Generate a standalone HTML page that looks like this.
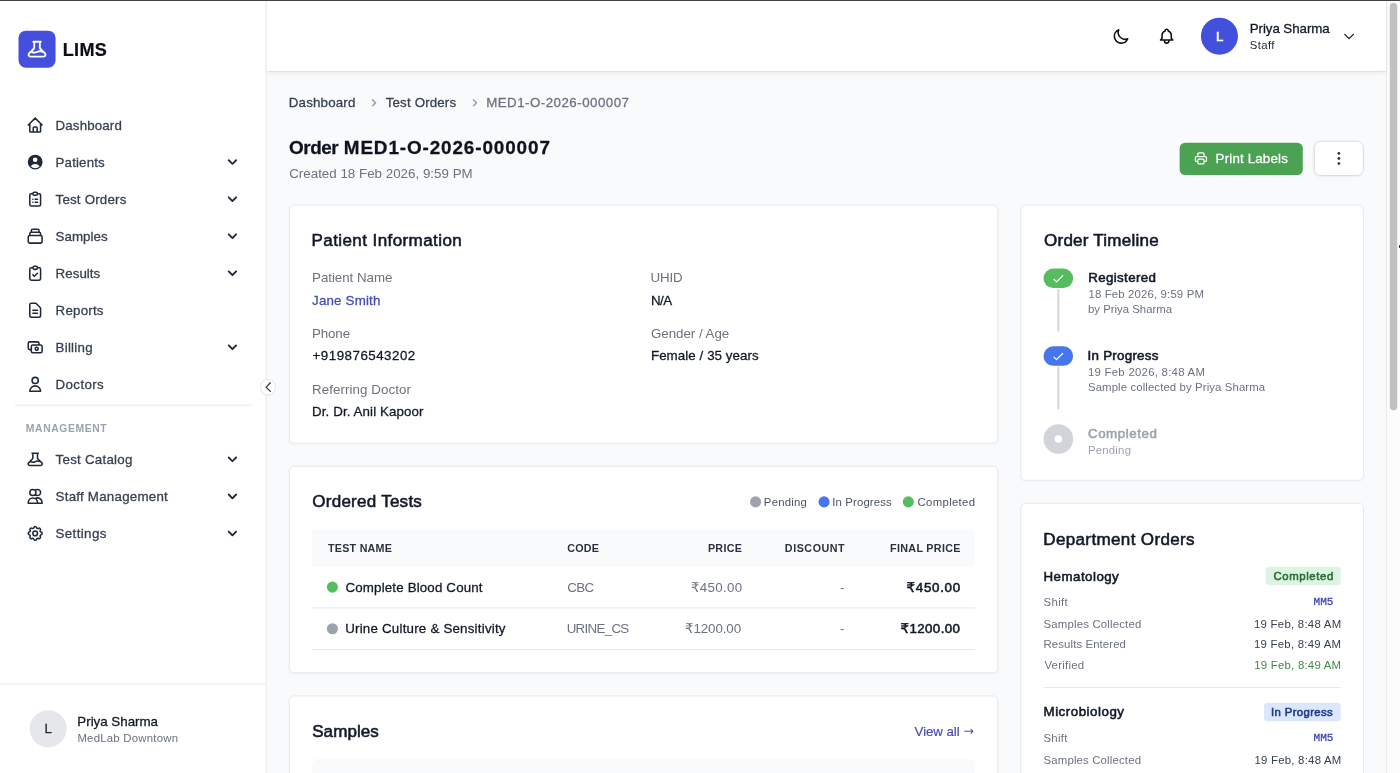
<!DOCTYPE html>
<html lang="en">
<head>
<meta charset="utf-8">
<title>Order MED1-O-2026-000007 · LIMS</title>
<style>
*{box-sizing:border-box;margin:0;padding:0}
html,body{width:1400px;height:773px;overflow:hidden;background:#f9fafb}
body{font-family:"Liberation Sans","DejaVu Sans",sans-serif;color:#111827;position:relative;-webkit-font-smoothing:antialiased}
#topline{position:absolute;left:0;top:0;width:1400px;height:1px;background:#434343;z-index:50}
#root{filter:opacity(1);position:absolute;left:0;top:1px;width:1512px;height:834px;transform:scale(.925926);transform-origin:0 0;background:#f9fafb;overflow:hidden}
svg{display:block;flex:none}
.ic{width:20px;height:20px;fill:none;stroke:currentColor;stroke-width:2;stroke-linecap:round;stroke-linejoin:round}
.m{-webkit-text-stroke:.3px currentColor}
.sb{font-weight:400!important;-webkit-text-stroke:.6px currentColor}
/* sidebar */
#sb{position:absolute;left:0;top:0;width:288px;height:834px;background:#fff;border-right:1px solid #e5e7eb}
#logo{position:absolute;left:20px;top:32px;width:40px;height:40px;border-radius:8px;background:#454fdd;color:#fff;display:flex;align-items:center;justify-content:center}
#brand{position:absolute;left:68px;top:38px;font-size:19.5px;line-height:28px;font-weight:700;color:#0b0f19;-webkit-text-stroke:.25px currentColor}
.nav{position:absolute;left:16px;width:256px;height:36px;padding:8px 12px;display:flex;align-items:center;color:#374151;font-size:14.4px;line-height:20px}
.nav .ic{margin-right:12px;color:#1f2937}
.nav .ch{margin-left:auto;width:20px;height:20px;margin-right:-1px;fill:#1f2937}
#sbdiv{position:absolute;left:16px;top:436px;width:256px;height:1px;background:#e5e7eb}
#mgmt{position:absolute;left:28px;top:453.4px;font-size:11.2px;line-height:16px;font-weight:700;color:#9ca3af;letter-spacing:.45px}
#sbfoot{position:absolute;left:0;top:736.8px;width:287px;height:98px;border-top:1px solid #e5e7eb}
#sbav{position:absolute;left:32px;top:28.6px;width:40px;height:40px;border-radius:50%;background:#e5e7eb;color:#1f2937;font-size:14.4px;line-height:40px;text-align:center}
#sbname{position:absolute;left:84px;top:30.6px;font-size:14.4px;line-height:20px;color:#111827;white-space:nowrap}
#sbsub{position:absolute;left:84px;top:50.6px;font-size:12.3px;line-height:16px;color:#6b7280;white-space:nowrap}
#tog{position:absolute;left:281.6px;top:408.9px;width:15.8px;height:15.8px;border-radius:50%;background:#fff;box-shadow:0 0 0 1px rgba(229,231,235,.9),0 1px 2px rgba(0,0,0,.08);color:#333;z-index:5;display:flex;align-items:center;justify-content:center}
/* header */
#hd{position:absolute;left:288px;top:0;width:1209px;height:76px;background:#fff;box-shadow:0 1px 1.5px rgba(0,0,0,.13),0 2px 5px rgba(0,0,0,.07);z-index:3}
#hd .ib{position:absolute;top:27.7px;color:#0b0f17}
#hdav{position:absolute;left:1009.3px;top:18px;width:40px;height:40px;border-radius:50%;background:#434fdd;color:#fff;font-size:14.4px;font-weight:700;line-height:40px;text-align:center}
#hdname{position:absolute;left:1062px;top:20px;font-size:14.4px;line-height:20px;color:#111827;white-space:nowrap}
#hdrole{position:absolute;left:1062px;top:40px;font-size:12.3px;line-height:16px;color:#1f2937;white-space:nowrap}
/* scrollbar */
#scr{position:absolute;left:1497px;top:0;width:15px;height:834px;background:#fcfcfc;border-left:1px solid #e8e8e8}
#scr i{position:absolute;left:3.2px;top:2px;width:7.6px;height:440px;border-radius:4px;background:#c1c1c1}
#cur{position:absolute;left:1398.6px;top:245.4px;width:1.4px;height:2.6px;background:#222;z-index:60;border-radius:1px 0 0 1px}
/* main */
#mn{position:absolute;left:288px;top:76px;width:1209px;height:758px;overflow:hidden}
.abs{position:absolute;white-space:nowrap}
.card{position:absolute;background:#fff;border:1px solid #e5e7eb;border-radius:5.5px;box-shadow:0 1px 2px rgba(0,0,0,.025)}
.ct{position:absolute;left:24px;top:24px;font-size:18.4px;line-height:28px;font-weight:700;color:#111827;white-space:nowrap;letter-spacing:.1px}
.lb{font-size:14.4px;line-height:20px;color:#6c717c;white-space:nowrap}
.vl{font-size:14.4px;line-height:20px;color:#111827;white-space:nowrap;margin-top:4px}
.fld{position:absolute}

.bc{font-size:14.4px;line-height:20px}
#ttl{left:24px;top:68px;font-size:20.4px;line-height:28px;font-weight:700;color:#0d1320;-webkit-text-stroke:.3px currentColor}
#crt{left:24px;top:100px;font-size:14.4px;line-height:20px;color:#6b7280}
#btnp{position:absolute;left:985.5px;top:76.5px;width:133.7px;height:35.6px;border-radius:6px;background:#4ba252;color:#fff;display:flex;align-items:center;padding-left:15.5px;font-size:14.4px;line-height:20px;white-space:nowrap}
#btnp span{margin-left:8px;position:relative;top:-.6px}
#btnm{position:absolute;left:1131px;top:75px;width:54px;height:38px;border-radius:8px;background:#fff;border:1px solid #d9dce1;box-shadow:0 1px 2px rgba(0,0,0,.05);display:flex;align-items:center;justify-content:center}
.lg{position:absolute;top:30px;font-size:12.3px;line-height:16px;color:#4b5563;white-space:nowrap;padding-left:16px}
.lg i{position:absolute;left:0;top:2px;width:12px;height:12px;border-radius:50%}
.th{position:absolute;background:#f9fafb;border-radius:8px 8px 0 0}
.th>div{position:absolute;top:12px;font-size:11.6px;line-height:16px;font-weight:700;color:#2a3240;letter-spacing:.7px;white-space:nowrap}
.tr{position:absolute;left:24px;width:716px;height:45px;border-bottom:1px solid #e5e7eb}
.tr>div{position:absolute;top:12px;font-size:14.4px;line-height:20px;color:#6b7280;white-space:nowrap}
.tr .dot{position:absolute;left:16px;top:16px;width:12px;height:12px;border-radius:50%}
.pill{position:absolute;left:24px;width:32px;height:21.400px;border-radius:16px;display:flex;align-items:center;justify-content:center}
.pill b{width:8px;height:8px;border-radius:50%;background:#fff}
.vln{position:absolute;left:39px;width:2px;height:46.300px;background:#d1d5db}
.tt{position:absolute;left:72px;font-size:14.4px;line-height:20px;font-weight:700;color:#111827;white-space:nowrap}
.ts{position:absolute;left:72px;font-size:12.3px;line-height:16px;color:#6b7280;white-space:nowrap}
.dh{position:absolute;left:24px;font-size:14.4px;line-height:20px;font-weight:700;color:#111827;white-space:nowrap}
.bdg{position:absolute;right:24px;height:20px;padding:2px 8px;border-radius:4px;font-size:12.3px;line-height:16px;font-weight:700;white-space:nowrap}
.dl{position:absolute;left:24px;font-size:12.3px;line-height:16px;color:#6b7280;white-space:nowrap}
.dv{position:absolute;right:24px;font-size:12.3px;line-height:16px;color:#374151;white-space:nowrap}
.mono{position:absolute;right:32px;font-family:"Liberation Mono","DejaVu Sans Mono",monospace;font-size:12px;line-height:20px;color:#3f45b0;white-space:nowrap;-webkit-text-stroke:.3px currentColor}
.hr{position:absolute;left:24px;right:24px;height:1px;background:#e5e7eb}
/* text fit */
#brandt{letter-spacing:0.37px;position:relative;left:-0.34px;top:-0.1px}
#n1{letter-spacing:0.15px;position:relative;top:-0.29px}
#n2{letter-spacing:0.16px;position:relative;top:-0.29px}
#n3{letter-spacing:0.21px;position:relative;top:-0.29px}
#n4{letter-spacing:0.05px;position:relative;top:-0.29px}
#n5{letter-spacing:0.05px;position:relative;top:-0.29px}
#n6{letter-spacing:0.23px;position:relative;top:-0.29px}
#n7{letter-spacing:0.26px;position:relative;top:-0.29px}
#n8{letter-spacing:0.41px;position:relative;top:-0.29px}
#n9{letter-spacing:0.27px;position:relative;top:-0.29px}
#n10{letter-spacing:0.26px;position:relative;top:-0.29px}
#n11{letter-spacing:0.41px;position:relative;top:-0.29px}
#mgmtt{letter-spacing:0.64px;position:relative;left:-0.08px}
#sbn{letter-spacing:-0.01px;position:relative;left:-0.46px;top:-0.29px}
#sbs{letter-spacing:0.25px;position:relative;left:-0.41px}
#hdn{letter-spacing:-0.07px;position:relative;left:-0.33px;top:-0.29px}
#hdr{letter-spacing:0.45px;position:relative;left:-0.38px}
#bc1{letter-spacing:0.18px;position:relative;left:-0.08px;top:-0.29px}
#bc2{letter-spacing:0.16px;position:relative;left:0.61px;top:-0.29px}
#bc3{letter-spacing:0.51px;position:relative;left:0.06px;top:-0.29px}
#ttl1{letter-spacing:-0.45px;position:relative;left:0.09px;top:-0.1px}
#ttl2{letter-spacing:0.96px;position:relative;left:0.32px;top:-0.1px}
#crtt{letter-spacing:0.02px;position:relative;left:0.32px;top:-0.29px}
#btnpt{letter-spacing:0.18px;position:relative;left:-0.15px;top:-0.29px}
#ct1{letter-spacing:0.44px;position:relative;left:-0.59px;top:0.17px}
#ct2{letter-spacing:0.27px;position:relative;left:0.23px;top:0.17px}
#ct3{letter-spacing:0.06px;position:relative;left:0.19px;top:0.17px}
#ct4{letter-spacing:0.25px;position:relative;left:0.54px;top:0.17px}
#ct5{letter-spacing:0.38px;position:relative;left:-0.31px;top:0.17px}
#f1l{letter-spacing:-0.04px;position:relative;top:-0.29px}
#f1v{letter-spacing:0.2px;position:relative;top:-0.29px}
#f3l{letter-spacing:-0.14px;position:relative;top:-0.29px}
#f3v{letter-spacing:0.53px;position:relative;left:0.62px;top:-0.29px}
#f5l{letter-spacing:0.08px;position:relative;top:-0.29px}
#f5v{letter-spacing:0.11px;position:relative;top:-0.29px}
#f2l{letter-spacing:-0.21px;position:relative;left:-0.39px;top:-0.29px}
#f2v{letter-spacing:-0.5px;position:relative;top:-0.29px}
#f4l{letter-spacing:-0.02px;position:relative;top:-0.29px}
#f4v{letter-spacing:0.08px;position:relative;top:-0.29px}
#th1{letter-spacing:0.25px;position:relative;left:1.3px}
#th2{letter-spacing:0.22px;position:relative;left:-0.25px}
#th3{letter-spacing:0.31px;position:relative;left:0.52px}
#th4{letter-spacing:0.58px;position:relative;left:-0.19px}
#th5{letter-spacing:0.34px;position:relative;left:0.63px}
#r1a{letter-spacing:0.17px;position:relative;left:0.14px;top:-0.29px}
#r1b{letter-spacing:-0.67px;position:relative;left:-0.48px;top:-0.29px}
#r1c{letter-spacing:0.35px;position:relative;left:0.82px;top:-0.29px}
#r1d{position:relative;left:-0.97px;top:-0.29px}
#r1e{letter-spacing:0.77px;position:relative;left:0.67px;top:-0.29px}
#r2a{letter-spacing:0.23px;position:relative;left:-0.2px;top:-0.29px}
#r2b{letter-spacing:-0.74px;position:relative;left:-1.01px;top:-0.29px}
#r2c{letter-spacing:-0.09px;position:relative;left:-0.7px;top:-0.29px}
#r2d{position:relative;left:-1.01px;top:-0.29px}
#r2e{letter-spacing:0.44px;position:relative;left:0.26px;top:-0.29px}
#va{letter-spacing:-0.08px;position:relative;left:-1.36px;top:-0.29px}
#tl1a{letter-spacing:0.39px;position:relative;left:0.26px;top:-0.29px}
#tl1b{letter-spacing:0.16px;position:relative;left:0.48px}
#tl2a{letter-spacing:0.29px;position:relative;left:-0.45px;top:-0.29px}
#tl2b{letter-spacing:0.28px}
#tl2c{letter-spacing:0.11px}
#tl3a{letter-spacing:0.6px;position:relative;top:-0.29px}
#tl3b{letter-spacing:0.22px}
#d1h{letter-spacing:0.5px;position:relative;top:-0.29px}
#d1b{letter-spacing:0.63px;position:relative;left:0.59px}
#d1l1{letter-spacing:0.37px}
#d1l2{letter-spacing:0.19px}
#d1l3{letter-spacing:0.11px}
#d1l4{letter-spacing:0.26px;position:relative;left:0.96px}
#d1v1{letter-spacing:-0.06px;position:relative;left:0.08px}
#d1v2{letter-spacing:0.28px;position:relative;left:0.72px}
#d1v3{letter-spacing:0.27px;position:relative;left:0.64px}
#d1v4{letter-spacing:0.26px;position:relative;left:0.66px}
#d2h{letter-spacing:0.56px;position:relative;top:-0.29px}
#d2b{letter-spacing:0.38px;position:relative;left:-0.26px}
#d2l1{letter-spacing:0.28px}
#d2l2{letter-spacing:0.17px}
#d2v1{letter-spacing:-0.05px;position:relative;left:0.12px}
#d2v2{letter-spacing:0.26px;position:relative;left:0.9px}
#lg1{letter-spacing:0.22px;position:relative;left:-1.06px}
#lg2{letter-spacing:0.12px;position:relative;left:-1.09px}
#lg3{letter-spacing:0.31px;position:relative;left:-0.18px}
#va2{position:relative;left:-1.28px}
</style>
</head>
<body>
<div id="topline"></div>
<div id="cur"></div>
<div id="root">
<aside id="sb">
  <div id="logo"><svg class="ic" viewBox="0 0 24 24" style="width:24px;height:24px"><path d="M19.428 15.428a2 2 0 00-1.022-.547l-2.387-.477a6 6 0 00-3.86.517l-.318.158a6 6 0 01-3.860.517L6.050 15.210a2 2 0 00-1.806.547M8 4h8l-1 1v5.172a2 2 0 00.586 1.414l5 5c1.260 1.260.367 3.414-1.415 3.414H4.828c-1.782 0-2.674-2.154-1.414-3.414l5-5A2 2 0 009 10.172V5L8 4z"/></svg></div>
  <div id="brand"><span id="brandt">LIMS</span></div>
  <div class="nav" style="top:116px"><svg class="ic" viewBox="0 0 24 24"><path d="M3 12l2-2m0 0l7-7 7 7M5 10v10a1 1 0 001 1h3m10-11l2 2m-2-2v10a1 1 0 01-1 1h-3m-6 0a.5.5 0 00.5-.5V15.500a1 1 0 011-1h3a1 1 0 011 1V20.500a.5.5 0 00.5.5m-6 0h6"/></svg><span class="m" id="n1">Dashboard</span></div>
  <div class="nav" style="top:156px"><svg class="ic" viewBox="0 0 20 20" style="fill:currentColor;stroke:none"><path fill-rule="evenodd" clip-rule="evenodd" d="M18 10a8 8 0 1 1-16 0 8 8 0 0 1 16 0Zm-5.500-2.500a2.500 2.500 0 1 1-5 0 2.500 2.500 0 0 1 5 0ZM10 12a5.990 5.990 0 0 0-4.793 2.390A6.483 6.483 0 0 0 10 16.500a6.483 6.483 0 0 0 4.793-2.110A5.990 5.990 0 0 0 10 12Z"/></svg><span class="m" id="n2">Patients</span><svg class="ch" viewBox="0 0 20 20"><path fill-rule="evenodd" clip-rule="evenodd" d="M5.293 7.293a1 1 0 011.414 0L10 10.586l3.293-3.293a1 1 0 111.414 1.414l-4 4a1 1 0 01-1.414 0l-4-4a1 1 0 010-1.414z"/></svg></div>
  <div class="nav" style="top:196px"><svg class="ic" viewBox="0 0 24 24"><path d="M9 5H7a2 2 0 00-2 2v12a2 2 0 002 2h10a2 2 0 002-2V7a2 2 0 00-2-2h-2M9 5a2 2 0 002 2h2a2 2 0 002-2M9 5a2 2 0 012-2h2a2 2 0 012 2m-3 7h3m-3 4h3m-6-4h.01M9 16h.01"/></svg><span class="m" id="n3">Test Orders</span><svg class="ch" viewBox="0 0 20 20"><path fill-rule="evenodd" clip-rule="evenodd" d="M5.293 7.293a1 1 0 011.414 0L10 10.586l3.293-3.293a1 1 0 111.414 1.414l-4 4a1 1 0 01-1.414 0l-4-4a1 1 0 010-1.414z"/></svg></div>
  <div class="nav" style="top:236px"><svg class="ic" viewBox="0 0 24 24"><path d="M19 11H5m14 0a2 2 0 012 2v6a2 2 0 01-2 2H5a2 2 0 01-2-2v-6a2 2 0 012-2m14 0V9a2 2 0 00-2-2M5 11V9a2 2 0 012-2m0 0V5a2 2 0 012-2h6a2 2 0 012 2v2M7 7h10"/></svg><span class="m" id="n4">Samples</span><svg class="ch" viewBox="0 0 20 20"><path fill-rule="evenodd" clip-rule="evenodd" d="M5.293 7.293a1 1 0 011.414 0L10 10.586l3.293-3.293a1 1 0 111.414 1.414l-4 4a1 1 0 01-1.414 0l-4-4a1 1 0 010-1.414z"/></svg></div>
  <div class="nav" style="top:276px"><svg class="ic" viewBox="0 0 24 24"><path d="M9 5H7a2 2 0 00-2 2v12a2 2 0 002 2h10a2 2 0 002-2V7a2 2 0 00-2-2h-2M9 5a2 2 0 002 2h2a2 2 0 002-2M9 5a2 2 0 012-2h2a2 2 0 012 2m-6 9l2 2 4-4"/></svg><span class="m" id="n5">Results</span><svg class="ch" viewBox="0 0 20 20"><path fill-rule="evenodd" clip-rule="evenodd" d="M5.293 7.293a1 1 0 011.414 0L10 10.586l3.293-3.293a1 1 0 111.414 1.414l-4 4a1 1 0 01-1.414 0l-4-4a1 1 0 010-1.414z"/></svg></div>
  <div class="nav" style="top:316px"><svg class="ic" viewBox="0 0 24 24"><path d="M9 12h6m-6 4h6m2 5H7a2 2 0 01-2-2V5a2 2 0 012-2h5.586a1 1 0 01.707.293l5.414 5.414a1 1 0 01.293.707V19a2 2 0 01-2 2z"/></svg><span class="m" id="n6">Reports</span></div>
  <div class="nav" style="top:356px"><svg class="ic" viewBox="0 0 24 24"><path d="M17 9V7a2 2 0 00-2-2H5a2 2 0 00-2 2v6a2 2 0 002 2h2m2 4h10a2 2 0 002-2v-6a2 2 0 00-2-2H9a2 2 0 00-2 2v6a2 2 0 002 2zm7-5a2 2 0 11-4 0 2 2 0 014 0z"/></svg><span class="m" id="n7">Billing</span><svg class="ch" viewBox="0 0 20 20"><path fill-rule="evenodd" clip-rule="evenodd" d="M5.293 7.293a1 1 0 011.414 0L10 10.586l3.293-3.293a1 1 0 111.414 1.414l-4 4a1 1 0 01-1.414 0l-4-4a1 1 0 010-1.414z"/></svg></div>
  <div class="nav" style="top:396px"><svg class="ic" viewBox="0 0 24 24"><path d="M16 7a4 4 0 11-8 0 4 4 0 018 0zM12 14a7 7 0 00-7 7h14a7 7 0 00-7-7z"/></svg><span class="m" id="n8">Doctors</span></div>
  <div id="sbdiv"></div>
  <div id="mgmt"><span id="mgmtt">MANAGEMENT</span></div>
  <div class="nav" style="top:477px"><svg class="ic" viewBox="0 0 24 24"><path d="M19.428 15.428a2 2 0 00-1.022-.547l-2.387-.477a6 6 0 00-3.86.517l-.318.158a6 6 0 01-3.860.517L6.050 15.210a2 2 0 00-1.806.547M8 4h8l-1 1v5.172a2 2 0 00.586 1.414l5 5c1.260 1.260.367 3.414-1.415 3.414H4.828c-1.782 0-2.674-2.154-1.414-3.414l5-5A2 2 0 009 10.172V5L8 4z"/></svg><span class="m" id="n9">Test Catalog</span><svg class="ch" viewBox="0 0 20 20"><path fill-rule="evenodd" clip-rule="evenodd" d="M5.293 7.293a1 1 0 011.414 0L10 10.586l3.293-3.293a1 1 0 111.414 1.414l-4 4a1 1 0 01-1.414 0l-4-4a1 1 0 010-1.414z"/></svg></div>
  <div class="nav" style="top:517px"><svg class="ic" viewBox="0 0 24 24"><path d="M12 4.354a4 4 0 110 5.292M15 21H3v-1a6 6 0 0112 0v1zm0 0h6v-1a6 6 0 00-9-5.197M13 7a4 4 0 11-8 0 4 4 0 018 0z"/></svg><span class="m" id="n10">Staff Management</span><svg class="ch" viewBox="0 0 20 20"><path fill-rule="evenodd" clip-rule="evenodd" d="M5.293 7.293a1 1 0 011.414 0L10 10.586l3.293-3.293a1 1 0 111.414 1.414l-4 4a1 1 0 01-1.414 0l-4-4a1 1 0 010-1.414z"/></svg></div>
  <div class="nav" style="top:557px"><svg class="ic" viewBox="0 0 24 24"><path d="M10.325 4.317c.426-1.756 2.924-1.756 3.350 0a1.724 1.724 0 002.573 1.066c1.543-.940 3.310.826 2.370 2.370a1.724 1.724 0 001.065 2.572c1.756.426 1.756 2.924 0 3.350a1.724 1.724 0 00-1.066 2.573c.940 1.543-.826 3.310-2.370 2.370a1.724 1.724 0 00-2.572 1.065c-.426 1.756-2.924 1.756-3.350 0a1.724 1.724 0 00-2.573-1.066c-1.543.940-3.310-.826-2.370-2.370a1.724 1.724 0 00-1.065-2.572c-1.756-.426-1.756-2.924 0-3.350a1.724 1.724 0 001.066-2.573c-.940-1.543.826-3.310 2.370-2.370.996.608 2.296.070 2.572-1.065z"/><path d="M15 12a3 3 0 11-6 0 3 3 0 016 0z"/></svg><span class="m" id="n11">Settings</span><svg class="ch" viewBox="0 0 20 20"><path fill-rule="evenodd" clip-rule="evenodd" d="M5.293 7.293a1 1 0 011.414 0L10 10.586l3.293-3.293a1 1 0 111.414 1.414l-4 4a1 1 0 01-1.414 0l-4-4a1 1 0 010-1.414z"/></svg></div>
  <div id="sbfoot">
    <div id="sbav" class="m">L</div>
    <div id="sbname" class="m"><span id="sbn">Priya Sharma</span></div>
    <div id="sbsub"><span id="sbs">MedLab Downtown</span></div>
  </div>
</aside>
<div id="tog"><svg class="ic" viewBox="0 0 24 24" style="width:16px;height:16px;margin-left:.9px"><path d="M15 19l-7-7 7-7"/></svg></div>

<header id="hd">
  <svg class="ic ib" viewBox="0 0 24 24" style="left:913.4px"><path d="M20.354 15.354A9 9 0 018.646 3.646 9.003 9.003 0 0012 21a9.003 9.003 0 008.354-5.646z"/></svg>
  <svg class="ic ib" viewBox="0 0 24 24" style="left:961.5px"><path d="M15 17h5l-1.405-1.405A2.032 2.032 0 0118 14.158V11a6.002 6.002 0 00-4-5.659V5a2 2 0 10-4 0v.341C7.670 6.165 6 8.388 6 11v3.159c0 .538-.214 1.055-.595 1.436L4 17h5m6 0v1a3 3 0 11-6 0v-1m6 0H9"/></svg>
  <div id="hdav" class="sb">L</div>
  <div id="hdname" class="m"><span id="hdn">Priya Sharma</span></div>
  <div id="hdrole"><span id="hdr">Staff</span></div>
  <svg class="ic" viewBox="0 0 24 24" style="position:absolute;left:1161px;top:30px;width:16px;height:16px;color:#111827"><path d="M19 9l-7 7-7-7"/></svg>
</header>

<main id="mn">
  <!-- breadcrumb -->
  <div class="abs bc m" style="left:24px;top:24px;color:#374151"><span id="bc1">Dashboard</span></div>
  <svg viewBox="0 0 20 20" style="position:absolute;left:107.6px;top:25.8px;width:16px;height:16px;fill:#9ca3af"><path fill-rule="evenodd" clip-rule="evenodd" d="M7.293 14.707a1 1 0 010-1.414L10.586 10 7.293 6.707a1 1 0 011.414-1.414l4 4a1 1 0 010 1.414l-4 4a1 1 0 01-1.414 0z"/></svg>
  <div class="abs bc m" style="left:128px;top:24px;color:#374151"><span id="bc2">Test Orders</span></div>
  <svg viewBox="0 0 20 20" style="position:absolute;left:216.6px;top:25.8px;width:16px;height:16px;fill:#9ca3af"><path fill-rule="evenodd" clip-rule="evenodd" d="M7.293 14.707a1 1 0 010-1.414L10.586 10 7.293 6.707a1 1 0 011.414-1.414l4 4a1 1 0 010 1.414l-4 4a1 1 0 01-1.414 0z"/></svg>
  <div class="abs bc m" style="left:237px;top:24px;color:#6b7280"><span id="bc3">MED1-O-2026-000007</span></div>

  <h1 class="abs" id="ttl"><span id="ttl1">Order</span> <span id="ttl2">MED1-O-2026-000007</span></h1>
  <div class="abs" id="crt"><span id="crtt">Created 18 Feb 2026, 9:59 PM</span></div>

  <div id="btnp"><svg class="ic" viewBox="0 0 24 24" style="width:16px;height:16px"><path d="M17 17h2a2 2 0 002-2v-4a2 2 0 00-2-2H5a2 2 0 00-2 2v4a2 2 0 002 2h2m2 4h6a2 2 0 002-2v-4a2 2 0 00-2-2H9a2 2 0 00-2 2v4a2 2 0 002 2zm8-12V5a2 2 0 00-2-2H9a2 2 0 00-2 2v4h10z"/></svg><span class="m" id="btnpt">Print Labels</span></div>
  <div id="btnm"><svg viewBox="0 0 24 24" style="width:20px;height:20px;fill:#1f2937"><circle cx="12" cy="5.400" r="1.700"/><circle cx="12" cy="12" r="1.700"/><circle cx="12" cy="18.600" r="1.700"/></svg></div>

  <!-- Patient Information -->
  <section class="card" style="left:24px;top:144px;width:766px;height:258px">
    <div class="ct sb"><span id="ct1">Patient Information</span></div>
    <div class="fld" style="left:24px;top:68px"><div class="lb"><span id="f1l">Patient Name</span></div><div class="vl m" style="color:#474db5"><span id="f1v">Jane Smith</span></div></div>
    <div class="fld" style="left:390px;top:68px"><div class="lb"><span id="f2l">UHID</span></div><div class="vl m"><span id="f2v">N/A</span></div></div>
    <div class="fld" style="left:24px;top:128px"><div class="lb"><span id="f3l">Phone</span></div><div class="vl m"><span id="f3v">+919876543202</span></div></div>
    <div class="fld" style="left:390px;top:128px"><div class="lb"><span id="f4l">Gender / Age</span></div><div class="vl m"><span id="f4v">Female / 35 years</span></div></div>
    <div class="fld" style="left:24px;top:188px"><div class="lb"><span id="f5l">Referring Doctor</span></div><div class="vl m"><span id="f5v">Dr. Dr. Anil Kapoor</span></div></div>
  </section>

  <!-- Ordered Tests -->
  <section class="card" style="left:24px;top:426px;width:766px;height:224px">
    <div class="ct sb"><span id="ct2">Ordered Tests</span></div>
    <div class="lg" style="left:497px"><i style="background:#9ca3af"></i><span id="lg1">Pending</span></div>
    <div class="lg" style="left:571px"><i style="background:#4776ec"></i><span id="lg2">In Progress</span></div>
    <div class="lg" style="left:662.2px"><i style="background:#55bc5f"></i><span id="lg3">Completed</span></div>
    <div class="th" style="left:24px;top:68px;width:716px;height:40px;border-radius:0">
      <div style="left:16px"><span id="th1">TEST NAME</span></div><div style="left:276px"><span id="th2">CODE</span></div><div style="right:252px"><span id="th3">PRICE</span></div><div style="right:140px"><span id="th4">DISCOUNT</span></div><div style="right:16px"><span id="th5">FINAL PRICE</span></div>
    </div>
    <div class="tr" style="top:108px">
      <i class="dot" style="background:#55bc5f"></i><div class="m" style="left:36px;color:#111827"><span id="r1a">Complete Blood Count</span></div><div style="left:276px"><span id="r1b">CBC</span></div><div style="right:252px"><span id="r1c">₹450.00</span></div><div style="right:140px"><span id="r1d">-</span></div><div class="sb" style="right:16px;color:#111827"><span id="r1e">₹450.00</span></div>
    </div>
    <div class="tr" style="top:153px">
      <i class="dot" style="background:#9ca3af"></i><div class="m" style="left:36px;color:#111827"><span id="r2a">Urine Culture &amp; Sensitivity</span></div><div style="left:276px"><span id="r2b">URINE_CS</span></div><div style="right:252px"><span id="r2c">₹1200.00</span></div><div style="right:140px"><span id="r2d">-</span></div><div class="sb" style="right:16px;color:#111827"><span id="r2e">₹1200.00</span></div>
    </div>
  </section>

  <!-- Samples -->
  <section class="card" style="left:24px;top:674px;width:766px;height:200px">
    <div class="ct sb"><span id="ct3">Samples</span></div>
    <div class="abs" style="right:24px;top:28px;font-size:14.4px;line-height:20px;color:#474db5;-webkit-text-stroke:.2px currentColor"><span id="va">View all</span> <span id="va2" style="font-family:'DejaVu Sans',sans-serif;font-size:13.4px;line-height:1;position:relative;top:-1.1px;-webkit-text-stroke:0">→</span></div>
    <div class="th" style="left:24px;top:67px;width:716px;height:40px"></div>
  </section>

  <!-- Order Timeline -->
  <section class="card" style="left:814px;top:144px;width:371px;height:298px">
    <div class="ct sb"><span id="ct4">Order Timeline</span></div>
    <div class="pill" style="top:68px;background:#55bc5f"><svg class="ic" viewBox="0 0 24 24" style="width:16px;height:16px;color:#fff"><path d="M5 13l4 4L19 7"/></svg></div>
    <div class="vln" style="top:89.700px"></div>
    <div class="tt sb" style="top:68px"><span id="tl1a">Registered</span></div>
    <div class="ts" style="top:88px"><span id="tl1b">18 Feb 2026, 9:59 PM</span></div>
    <div class="ts" style="top:104px"><span id="tl1c">by Priya Sharma</span></div>

    <div class="pill" style="top:152px;background:#4776ec"><svg class="ic" viewBox="0 0 24 24" style="width:16px;height:16px;color:#fff"><path d="M5 13l4 4L19 7"/></svg></div>
    <div class="vln" style="top:173.700px"></div>
    <div class="tt sb" style="top:152px"><span id="tl2a">In Progress</span></div>
    <div class="ts" style="top:172px"><span id="tl2b">19 Feb 2026, 8:48 AM</span></div>
    <div class="ts" style="top:188px"><span id="tl2c">Sample collected by Priya Sharma</span></div>

    <div class="pill" style="top:236px;height:32px;background:#d1d5db"><b></b></div>
    <div class="tt sb" style="top:236px;color:#9ca3af"><span id="tl3a">Completed</span></div>
    <div class="ts" style="top:256px;color:#9ca3af"><span id="tl3b">Pending</span></div>
  </section>

  <!-- Department Orders -->
  <section class="card" style="left:814px;top:466px;width:371px;height:420px">
    <div class="ct sb"><span id="ct5">Department Orders</span></div>
    <div class="dh sb" style="top:68px"><span id="d1h">Hematology</span></div>
    <div class="bdg sb" style="top:68px;background:#dcf5e0;color:#2e6b3a"><span id="d1b">Completed</span></div>
    <div class="dl" style="top:98px"><span id="d1l1">Shift</span></div><div class="mono" style="top:96px"><span id="d1v1">MM5</span></div>
    <div class="dl" style="top:122px"><span id="d1l2">Samples Collected</span></div><div class="dv" style="top:122px"><span id="d1v2">19 Feb, 8:48 AM</span></div>
    <div class="dl" style="top:144px"><span id="d1l3">Results Entered</span></div><div class="dv" style="top:144px"><span id="d1v3">19 Feb, 8:49 AM</span></div>
    <div class="dl" style="top:166px"><span id="d1l4">Verified</span></div><div class="dv" style="top:166px;color:#3f8a47"><span id="d1v4">19 Feb, 8:49 AM</span></div>
    <div class="hr" style="top:198px"></div>
    <div class="dh sb" style="top:214.500px"><span id="d2h">Microbiology</span></div>
    <div class="bdg sb" style="top:214.500px;background:#dbe7fd;color:#1e3a8a"><span id="d2b">In Progress</span></div>
    <div class="dl" style="top:245px"><span id="d2l1">Shift</span></div><div class="mono" style="top:243px"><span id="d2v1">MM5</span></div>
    <div class="dl" style="top:269px"><span id="d2l2">Samples Collected</span></div><div class="dv" style="top:269px"><span id="d2v2">19 Feb, 8:48 AM</span></div>
  </section>
</main>

<div id="scr"><i></i></div>

</div>
</body>
</html>
